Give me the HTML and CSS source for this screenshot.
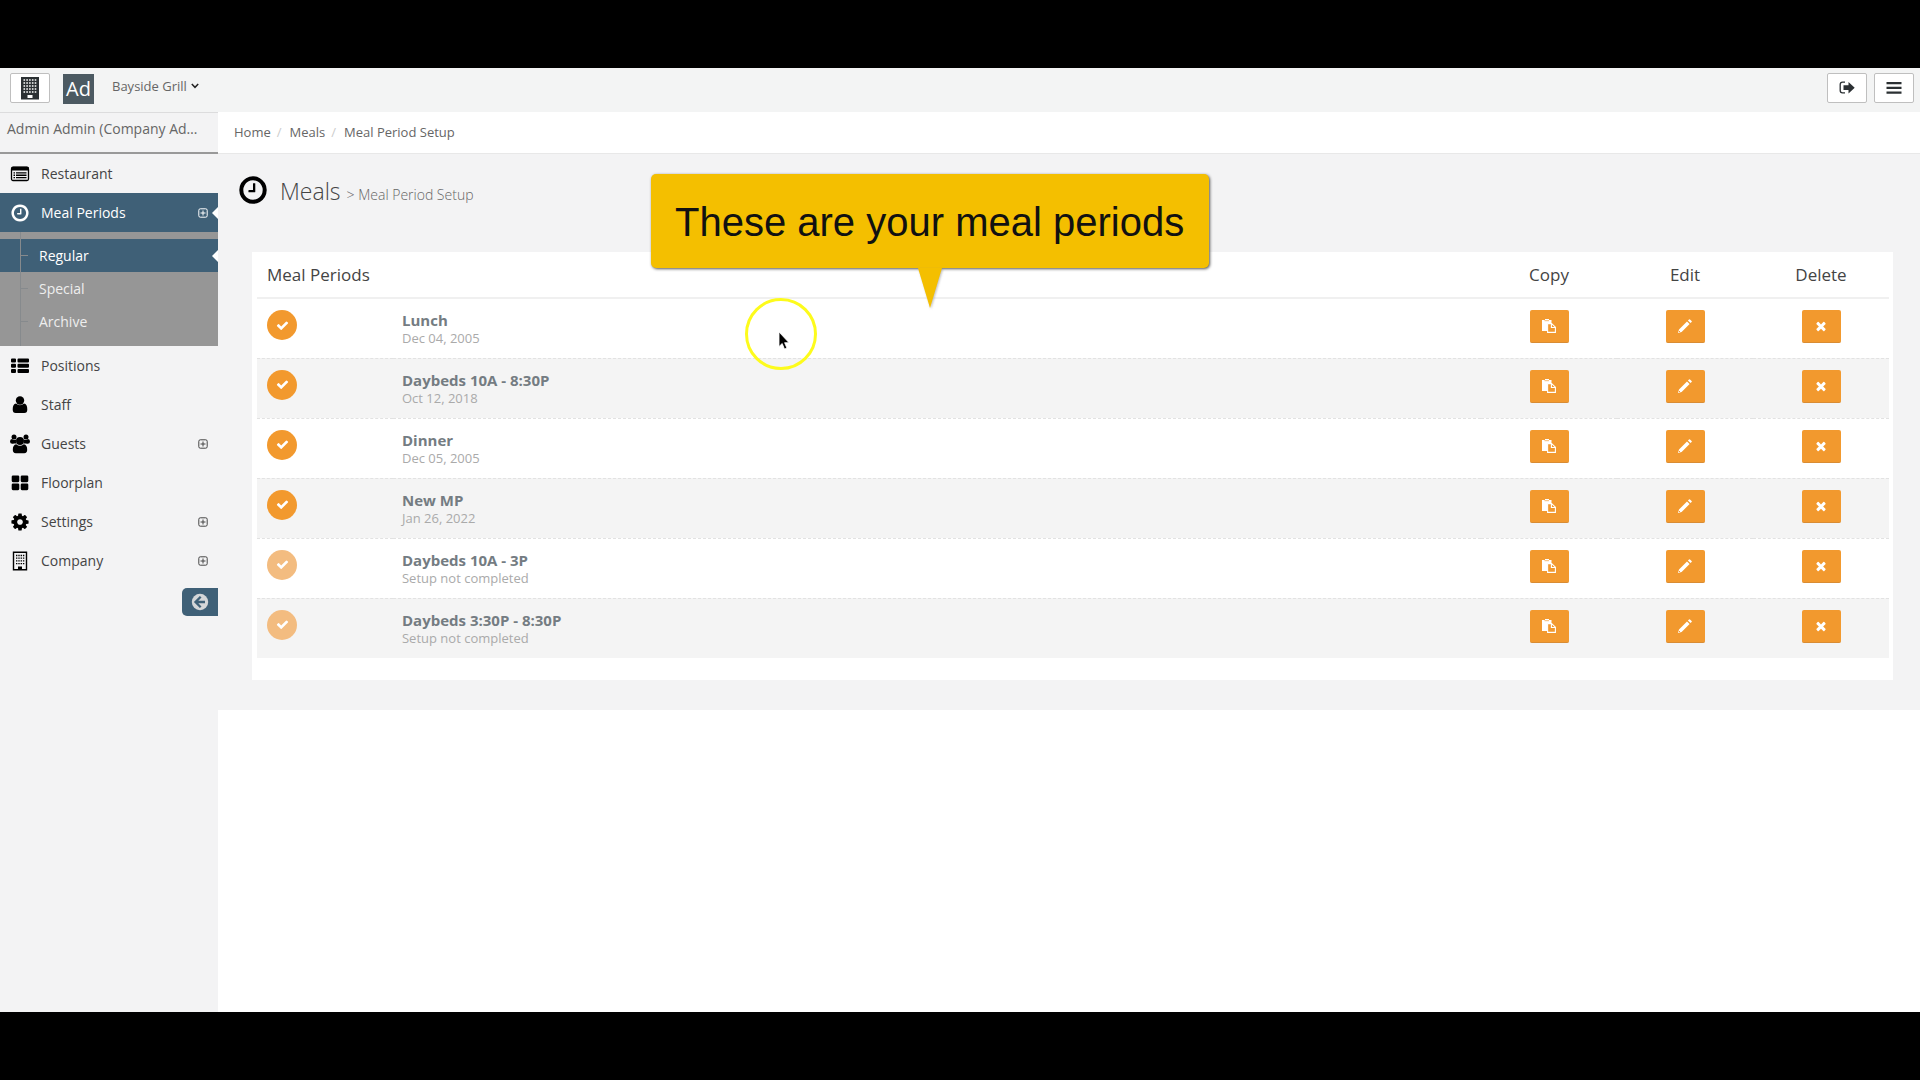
FILE: index.html
```html
<!DOCTYPE html>
<html lang="en">
<head>
<meta charset="utf-8">
<title>Meal Period Setup</title>
<link rel="stylesheet" href="styles.css">
</head>
<body>
<svg class="sprite" aria-hidden="true">
  <symbol id="i-clock" viewBox="0 0 1792 1792"><path d="M1024 544v448q0 14-9 23t-23 9h-320q-14 0-23-9t-9-23v-64q0-14 9-23t23-9h224v-352q0-14 9-23t23-9h64q14 0 23 9t9 23zm416 352q0-148-73-273t-198-198-273-73-273 73-198 198-73 273 73 273 198 198 273 73 273-73 198-198 73-273zm224 0q0 209-103 385.5t-279.5 279.5-385.5 103-385.5-103-279.5-279.5-103-385.5 103-385.5 279.5-279.5 385.5-103 385.5 103 279.5 279.5 103 385.5z"/></symbol>
  <symbol id="i-check" viewBox="0 0 1792 1792"><path d="M1671 566q0 40-28 68l-724 724-136 136q-28 28-68 28t-68-28l-136-136-362-362q-28-28-28-68t28-68l136-136q28-28 68-28t68 28l294 295 656-657q28-28 68-28t68 28l136 136q28 28 28 68z"/></symbol>
  <symbol id="i-times" viewBox="0 0 1792 1792"><path d="M1490 1322q0 40-28 68l-136 136q-28 28-68 28t-68-28l-294-294-294 294q-28 28-68 28t-68-28l-136-136q-28-28-28-68t28-68l294-294-294-294q-28-28-28-68t28-68l136-136q28-28 68-28t68 28l294 294 294-294q28-28 68-28t68 28l136 136q28 28 28 68t-28 68l-294 294 294 294q28 28 28 68z"/></symbol>
  <symbol id="i-cog" viewBox="0 0 1792 1792"><path d="M1152 896q0-106-75-181t-181-75-181 75-75 181 75 181 181 75 181-75 75-181zm512-109v222q0 12-8 23t-20 13l-185 28q-19 54-39 91 35 50 107 138 10 12 10 25t-9 23q-27 37-99 108t-94 71q-12 0-26-9l-138-108q-44 23-91 38-16 136-29 186-7 28-36 28h-222q-14 0-24.5-8.5t-11.5-21.5l-28-184q-49-16-90-37l-141 107q-10 9-25 9-14 0-25-11-126-114-165-168-7-10-7-23 0-12 8-23 15-21 51-66.5t54-70.5q-27-50-41-99l-183-27q-13-2-21-12.5t-8-23.5v-222q0-12 8-23t19-13l186-28q14-46 39-92-40-57-107-138-10-12-10-24 0-10 9-23 26-36 98.5-107.5t94.5-71.5q13 0 26 10l138 107q44-23 91-38 16-136 29-186 7-28 36-28h222q14 0 24.5 8.5t11.5 21.5l28 184q49 16 90 37l142-107q9-9 24-9 13 0 25 10 129 119 165 170 7 8 7 22 0 12-8 23-15 21-51 66.5t-54 70.5q26 50 41 98l183 28q13 2 21 12.5t8 23.5z"/></symbol>
  <symbol id="i-card" viewBox="0 0 20 20"><rect x="1.500" y="3.500" width="17" height="13" rx="1.500" fill="none" stroke="currentColor" stroke-width="1.300"/><path d="M1 4.500Q1 2.500 3 2.500h14q2 0 2 2V6.500H1z"/><path d="M3.500 8.200h1.500v1.300H3.500zm0 2.400h1.500v1.300H3.500zm0 2.400h1.500v1.300H3.500zM6 8.200h10.500v1.300H6zm0 2.400h10.500v1.300H6zM6 13h10.500v1.300H6z"/></symbol>
  <symbol id="i-list" viewBox="0 0 20 20"><path d="M2 2.500h3q1 0 1 1v2q0 1-1 1H2q-1 0-1-1v-2q0-1 1-1zm0 5.200h3q1 0 1 1v2q0 1-1 1H2q-1 0-1-1v-2q0-1 1-1zm0 5.300h3q1 0 1 1v2q0 1-1 1H2q-1 0-1-1v-2q0-1 1-1zM8.500 2.500H18q1 0 1 1v2q0 1-1 1H8.500q-1 0-1-1v-2q0-1 1-1zm0 5.200H18q1 0 1 1v2q0 1-1 1H8.500q-1 0-1-1v-2q0-1 1-1zm0 5.300H18q1 0 1 1v2q0 1-1 1H8.500q-1 0-1-1v-2q0-1 1-1z"/></symbol>
  <symbol id="i-user" viewBox="0 0 20 20"><circle cx="10" cy="5.500" r="4.200"/><path d="M6 8.600q4 3.400 8 0 3.300.6 3.300 5.900 0 3.500-3 3.500H5.700q-3 0-3-3.500 0-5.300 3.300-5.900z"/></symbol>
  <symbol id="i-users" viewBox="0 0 20 20"><circle cx="4" cy="3" r="2.500"/><circle cx="16" cy="3" r="2.500"/><path d="M2 5q2 1.500 4.200.6-.7 2.300.4 4H4Q0 10.500 0 7.500 0 5 2 5zm16 0q-2 1.500-4.200.6.7 2.300-.4 4H16q4 .9 4-2.100Q20 5 18 5z"/><circle cx="10" cy="7" r="4"/><path d="M6.200 10.200q3.800 3.200 7.600 0 3.400.6 3.400 5.600 0 3.400-3 3.400H5.800q-3 0-3-3.400 0-5 3.400-5.600z"/></symbol>
  <symbol id="i-grid" viewBox="0 0 20 20"><path d="M3 2.500h5q1.300 0 1.300 1.300v4q0 1.400-1.300 1.400H3q-1.300 0-1.300-1.400v-4Q1.700 2.500 3 2.500zm9 0h5q1.300 0 1.300 1.300v4q0 1.400-1.300 1.400h-5q-1.300 0-1.300-1.400v-4q0-1.300 1.300-1.300zm-9 8h5q1.300 0 1.300 1.300v4q0 1.400-1.300 1.400H3q-1.300 0-1.300-1.400v-4q0-1.300 1.300-1.300zm9 0h5q1.300 0 1.300 1.300v4q0 1.400-1.300 1.400h-5q-1.300 0-1.300-1.400v-4q0-1.300 1.300-1.300z"/></symbol>
  <symbol id="i-building" viewBox="0 0 20 20"><path d="M3.500 1.200h13v17.600h-13z" fill="none" stroke="currentColor" stroke-width="1.400"/><path d="M6 4.500h8.500M6 7.200h8.500M6 9.900h8.500M6 12.600h8.500" fill="none" stroke="currentColor" stroke-width="1.300" stroke-dasharray="1.400 .9"/><path d="M8 18.500v-3h4v3z"/></symbol>
  <symbol id="i-building-solid" viewBox="0 0 20 24"><path d="M1 1h18v22.500H1z"/><path d="M3.500 4h13M3.500 7h13M3.500 10h13M3.500 13h13M3.500 16h13" fill="none" stroke="#fff" stroke-width="1.500" stroke-dasharray="1.600 1.200"/><path d="M7.500 19h5v3h-5z" fill="#fff"/></symbol>
  <symbol id="i-plus" viewBox="0 0 10 10"><rect x=".8" y=".8" width="8.400" height="8.400" rx="1.500" fill="none" stroke="currentColor"/><path d="M5 2.500v5M2.500 5h5" fill="none" stroke="currentColor"/></symbol>
  <symbol id="i-copy" viewBox="0 0 14 14"><path d="M0 1h3V0h4v1h2.500v3H5v8H0z"/><path d="M2.500 1.700h4.500" stroke="#f2992e" stroke-width=".7"/><path d="M5.600 4.600h4l3.800 3.600v5.200H5.600z" fill="#f2992e" stroke="currentColor" stroke-width="1.100"/><path d="M9.400 4.500v4h4" fill="none" stroke="currentColor" stroke-width="1.100"/></symbol>
  <symbol id="i-pencil" viewBox="0 0 14 14"><path d="M0 14l1-3.600L9 2.400l2.600 2.600-8 8zM9.900 1.500l1.100-1.100q.5-.5 1 0l1.600 1.600q.5.500 0 1l-1.100 1.100z"/><path d="M1 12l1 1" stroke="#f2992e"/></symbol>
  <symbol id="i-exit" viewBox="0 0 16 14"><path d="M6 1.200H3.500Q1.200 1.200 1.200 3.500v6q0 2.300 2.300 2.300H6" fill="none" stroke="currentColor" stroke-width="1.300"/><path d="M4.500 4.300H9.500V1L15.700 6.700 9.500 12.500V9.100H4.500z"/></symbol>
  <symbol id="i-bars" viewBox="0 0 16 14"><path d="M.5 1h15v2.300H.5zm0 4.700h15V8H.5zm0 4.700h15v2.300H.5z"/></symbol>
  <symbol id="i-back" viewBox="0 0 18 18"><circle cx="9" cy="9" r="8.200"/><path d="M9.700 3.800L4.500 9l5.200 5.200M5 9h9" fill="none" stroke="#3f6077" stroke-width="2.300"/></symbol>
  <symbol id="i-down" viewBox="0 0 8 6"><path d="M.8 1L4 4.300 7.200 1" fill="none" stroke="currentColor" stroke-width="1.500"/></symbol>
</svg>

<div class="app">
  <header class="topbar">
    <button class="tool" type="button" aria-label="Company"><svg class="tool-building"><use href="#i-building-solid"/></svg></button>
    <span class="avatar">Ad</span>
    <button class="venue" type="button">Bayside Grill<svg><use href="#i-down"/></svg></button>
    <div class="tools">
      <button class="tool" type="button" aria-label="Sign out"><svg><use href="#i-exit"/></svg></button>
      <button class="tool" type="button" aria-label="Menu"><svg><use href="#i-bars"/></svg></button>
    </div>
  </header>

  <div class="body">
    <aside class="sidebar">
      <div class="user">Admin Admin (Company Admin)</div>
      <nav>
        <ul class="nav">
          <li><a href="#"><svg class="icon"><use href="#i-card"/></svg>Restaurant</a></li>
          <li>
            <a class="active" href="#"><svg class="icon"><use href="#i-clock"/></svg>Meal Periods<svg class="expand"><use href="#i-plus"/></svg></a>
            <ul class="subnav">
              <li><a class="active" href="#">Regular</a></li>
              <li><a href="#">Special</a></li>
              <li><a href="#">Archive</a></li>
            </ul>
          </li>
          <li><a href="#"><svg class="icon"><use href="#i-list"/></svg>Positions</a></li>
          <li><a href="#"><svg class="icon"><use href="#i-user"/></svg>Staff</a></li>
          <li><a href="#"><svg class="icon"><use href="#i-users"/></svg>Guests<svg class="expand"><use href="#i-plus"/></svg></a></li>
          <li><a href="#"><svg class="icon"><use href="#i-grid"/></svg>Floorplan</a></li>
          <li><a href="#"><svg class="icon"><use href="#i-cog"/></svg>Settings<svg class="expand"><use href="#i-plus"/></svg></a></li>
          <li><a href="#"><svg class="icon"><use href="#i-building"/></svg>Company<svg class="expand"><use href="#i-plus"/></svg></a></li>
        </ul>
      </nav>
      <button class="collapse" type="button" aria-label="Collapse menu"><svg><use href="#i-back"/></svg></button>
    </aside>

    <main class="main">
      <ol class="crumbs">
        <li><a href="#">Home</a></li>
        <li><a href="#">Meals</a></li>
        <li>Meal Period Setup</li>
      </ol>
      <section class="content">
        <div class="heading">
          <svg><use href="#i-clock"/></svg>
          <h1>Meals <small>&gt; Meal Period Setup</small></h1>
        </div>
        <div class="panel">
          <table class="periods">
            <colgroup><col class="slim"><col><col class="slim"><col class="slim"><col class="slim"></colgroup>
            <thead>
              <tr><th colspan="2">Meal Periods</th><th class="act">Copy</th><th class="act">Edit</th><th class="act">Delete</th></tr>
            </thead>
            <tbody>
              <tr>
                <td><span class="status"><svg><use href="#i-check"/></svg></span></td>
                <td class="name"><b>Lunch</b><span>Dec 04, 2005</span></td>
                <td class="act"><button type="button" aria-label="Copy"><svg><use href="#i-copy"/></svg></button></td>
                <td class="act"><button type="button" aria-label="Edit"><svg><use href="#i-pencil"/></svg></button></td>
                <td class="act"><button type="button" aria-label="Delete"><svg><use href="#i-times"/></svg></button></td>
              </tr>
              <tr>
                <td><span class="status"><svg><use href="#i-check"/></svg></span></td>
                <td class="name"><b>Daybeds 10A - 8:30P</b><span>Oct 12, 2018</span></td>
                <td class="act"><button type="button" aria-label="Copy"><svg><use href="#i-copy"/></svg></button></td>
                <td class="act"><button type="button" aria-label="Edit"><svg><use href="#i-pencil"/></svg></button></td>
                <td class="act"><button type="button" aria-label="Delete"><svg><use href="#i-times"/></svg></button></td>
              </tr>
              <tr>
                <td><span class="status"><svg><use href="#i-check"/></svg></span></td>
                <td class="name"><b>Dinner</b><span>Dec 05, 2005</span></td>
                <td class="act"><button type="button" aria-label="Copy"><svg><use href="#i-copy"/></svg></button></td>
                <td class="act"><button type="button" aria-label="Edit"><svg><use href="#i-pencil"/></svg></button></td>
                <td class="act"><button type="button" aria-label="Delete"><svg><use href="#i-times"/></svg></button></td>
              </tr>
              <tr>
                <td><span class="status"><svg><use href="#i-check"/></svg></span></td>
                <td class="name"><b>New MP</b><span>Jan 26, 2022</span></td>
                <td class="act"><button type="button" aria-label="Copy"><svg><use href="#i-copy"/></svg></button></td>
                <td class="act"><button type="button" aria-label="Edit"><svg><use href="#i-pencil"/></svg></button></td>
                <td class="act"><button type="button" aria-label="Delete"><svg><use href="#i-times"/></svg></button></td>
              </tr>
              <tr>
                <td><span class="status pending"><svg><use href="#i-check"/></svg></span></td>
                <td class="name"><b>Daybeds 10A - 3P</b><span>Setup not completed</span></td>
                <td class="act"><button type="button" aria-label="Copy"><svg><use href="#i-copy"/></svg></button></td>
                <td class="act"><button type="button" aria-label="Edit"><svg><use href="#i-pencil"/></svg></button></td>
                <td class="act"><button type="button" aria-label="Delete"><svg><use href="#i-times"/></svg></button></td>
              </tr>
              <tr>
                <td><span class="status pending"><svg><use href="#i-check"/></svg></span></td>
                <td class="name"><b>Daybeds 3:30P - 8:30P</b><span>Setup not completed</span></td>
                <td class="act"><button type="button" aria-label="Copy"><svg><use href="#i-copy"/></svg></button></td>
                <td class="act"><button type="button" aria-label="Edit"><svg><use href="#i-pencil"/></svg></button></td>
                <td class="act"><button type="button" aria-label="Delete"><svg><use href="#i-times"/></svg></button></td>
              </tr>
            </tbody>
          </table>
        </div>
      </section>
    </main>
  </div>

  <div class="callout">These are your meal periods<svg viewBox="0 0 24 40"><path d="M0 0h24L12 40z"/></svg></div>
  <div class="pointer"><svg viewBox="0 0 12 20"><path d="M1 1v14.500l3.200-3 2.300 5.600 2.400-1-2.300-5.400H11z" stroke="#fff" stroke-width=".8"/></svg></div>
</div>
</body>
</html>
```
FILE: styles.css
```css
* { box-sizing: border-box; }

body {
  margin: 0;
  padding: 68px 0;
  min-height: 100vh;
  display: flex;
  background: #000;
  color: #444;
  font: 13px/20px "Open Sans", "Noto Sans", sans-serif;
}

svg { fill: currentColor; flex: none; display: block; }
.sprite { position: absolute; width: 0; height: 0; }
a { color: inherit; text-decoration: none; }
ul, ol { margin: 0; padding: 0; list-style: none; }
button { font: inherit; color: inherit; padding: 0; cursor: pointer; }

.app {
  position: relative;
  flex: 1;
  display: flex;
  flex-direction: column;
  background: #fff;
}

/* top bar */
.topbar {
  display: flex;
  align-items: center;
  height: 44px;
  padding: 0 6px 4px 10px;
  background: #f3f4f4;
}
.tool {
  width: 40px;
  height: 30px;
  display: flex;
  align-items: center;
  justify-content: center;
  background: #fff;
  border: 1px solid #bfbfbf;
  border-radius: 2px;
  color: #2b3033;
}
.tool svg { width: 16px; height: 14px; }
.tool .tool-building { width: 20px; height: 24px; }
.avatar {
  width: 31px;
  height: 30px;
  margin: 2px 18px 0 13px;
  background: #4c5a62;
  color: #fff;
  font-size: 20px;
  line-height: 30px;
  text-align: center;
}
.venue {
  display: flex;
  align-items: center;
  gap: 4px;
  margin-bottom: 4px;
  border: 0;
  background: none;
  color: #666;
}
.venue svg { width: 8px; height: 6px; color: #222; }
.tools { display: flex; gap: 7px; margin-left: auto; }

/* sidebar */
.body { flex: 1; display: flex; }
.sidebar {
  width: 218px;
  flex: none;
  background: #f3f3f4;
  border-top: 1px solid #dcdcdd;
}
.user {
  height: 41px;
  padding: 6px 18px 0 7px;
  border-bottom: 2px solid #999;
  font-size: 14px;
  color: #666;
  white-space: nowrap;
  overflow: hidden;
  text-overflow: ellipsis;
}
.nav a {
  position: relative;
  display: flex;
  align-items: center;
  height: 39px;
  padding: 0 10px;
  font-size: 14px;
  color: #444;
}
.nav .icon { width: 20px; height: 20px; margin-right: 11px; color: #000; }
.nav .expand { width: 10px; height: 10px; margin-left: auto; }
.nav a.active, .nav a.active .icon { color: #fff; }
.nav a.active { background: #3f6077; }
.nav a.active::after {
  content: "";
  position: absolute;
  right: 0;
  border: 6px solid transparent;
  border-left: 0;
  border-right-color: #fff;
}
.subnav {
  position: relative;
  padding: 7px 0 8px;
  background: #969696;
}
.subnav::before {
  content: "";
  position: absolute;
  z-index: 1;
  top: 0;
  bottom: 0;
  left: 20px;
  border-left: 1px solid #868a8d;
}
.subnav a { height: 33px; padding: 0 10px 0 39px; color: #eee; }
.subnav a::before {
  content: "";
  position: absolute;
  left: 21px;
  width: 7px;
  border-top: 1px solid #868a8d;
}
.collapse {
  display: flex;
  align-items: center;
  justify-content: center;
  width: 36px;
  height: 28px;
  margin: 8px 0 0 auto;
  border: 0;
  border-radius: 5px 0 0 5px;
  background: #3f6077;
  color: #d4d6d8;
}
.collapse svg { width: 18px; height: 18px; }

/* main column */
.main { flex: 1; min-width: 0; }
.crumbs {
  display: flex;
  align-items: center;
  height: 42px;
  padding: 0 16px 2px;
  border-bottom: 1px solid #e8e8e8;
  color: #666;
}
.crumbs li + li::before { content: "/"; color: #ccc; padding: 0 8px 0 6px; }
.content { padding: 20px 27px 30px 34px; background: #f3f3f4; }
.heading {
  display: flex;
  align-items: flex-start;
  gap: 11px;
  height: 78px;
}
.heading svg { width: 32px; height: 32px; margin-left: -15px; color: #000; }
.heading h1 {
  margin: 0;
  font-size: 23px;
  line-height: 34px;
  font-weight: 300;
  color: #444;
}
.heading small { font-size: 14px; color: #666; }

.panel { padding: 0 4px 22px 5px; background: #fff; }
.periods {
  width: 100%;
  table-layout: fixed;
  border-collapse: collapse;
}
.slim { width: 8.333%; }
.periods th {
  height: 46px;
  padding: 0 10px;
  border-bottom: 2px solid #f0f0f0;
  font-size: 17px;
  font-weight: 400;
  text-align: left;
}
.periods td {
  height: 60px;
  padding: 11px 10px 0;
  vertical-align: top;
  border-bottom: 1px dashed #e2e2e2;
}
.periods tr:last-child td { border-bottom: 0; }
.periods tbody tr:nth-child(even) { background: #f4f4f4; }
.periods .act { text-align: center; }
.status {
  display: flex;
  align-items: center;
  justify-content: center;
  width: 30px;
  height: 30px;
  border-radius: 50%;
  background: #f2992e;
  color: #fff;
}
.status svg { width: 13px; height: 13px; }
.status.pending { background: #f3bc80; }
.periods .name { padding-left: 9px; }
.name b { display: block; font-size: 15px; line-height: 20px; color: #747c82; }
.name span { display: block; line-height: 16px; color: #aaa; }
.act button {
  display: inline-flex;
  align-items: center;
  justify-content: center;
  width: 39px;
  height: 33px;
  border: 0;
  border-bottom: 1px solid #d98c33;
  border-radius: 2px;
  background: #f2992e;
  color: #fff;
}
.act svg { width: 14px; height: 14px; }

/* tour overlay */
.callout {
  position: absolute;
  top: 106px;
  left: 651px;
  padding: 25px 25px 23px 24px;
  border-radius: 5px;
  background: #f4bf00;
  box-shadow: 1px 1px 3px #555;
  color: #111;
  font: 40px/46px "Liberation Sans", Arial, sans-serif;
  white-space: nowrap;
}
.callout svg {
  position: absolute;
  top: 100%;
  left: 50%;
  width: 24px;
  height: 40px;
  margin-left: -12px;
  color: #f4bf00;
  filter: drop-shadow(1px 1px 1px #8888);
}
.pointer {
  position: absolute;
  top: 230px;
  left: 745px;
  display: grid;
  place-content: center;
  width: 72px;
  height: 72px;
  padding: 14px 0 0 6px;
  border: 3px solid #fdfb1c;
  border-radius: 50%;
}
.pointer svg { width: 12px; height: 20px; color: #000; }
```
